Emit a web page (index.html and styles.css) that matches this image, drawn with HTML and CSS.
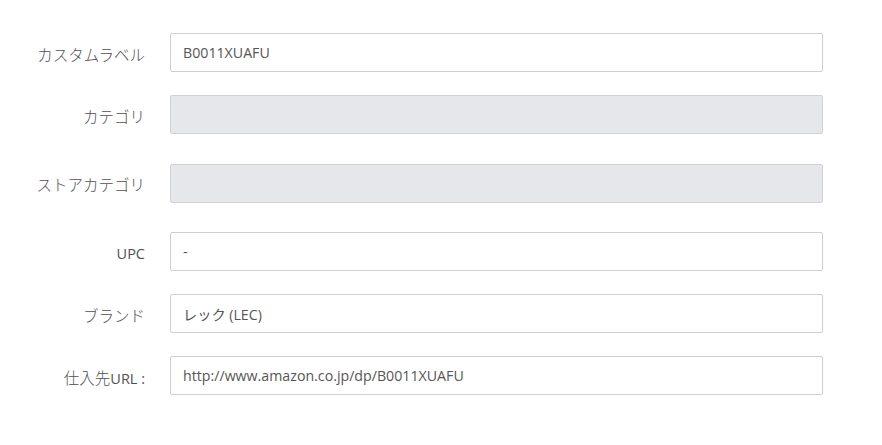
FILE: index.html
```html
<!DOCTYPE html>
<html lang="ja">
<head>
<meta charset="utf-8">
<link rel="stylesheet" href="styles.css">
</head>
<body>
<form class="form">
  <div class="row">
    <label class="label">カスタムラベル</label>
    <div class="field">B0011XUAFU</div>
  </div>
  <div class="row row-select">
    <label class="label">カテゴリ</label>
    <div class="field field-disabled"></div>
  </div>
  <div class="row row-select">
    <label class="label">ストアカテゴリ</label>
    <div class="field field-disabled"></div>
  </div>
  <div class="row">
    <label class="label"><span class="latin">UPC</span></label>
    <div class="field">-</div>
  </div>
  <div class="row">
    <label class="label">ブランド</label>
    <div class="field">レック (LEC)</div>
  </div>
  <div class="row">
    <label class="label">仕入先<span class="latin">URL :</span></label>
    <div class="field">http://www.amazon.co.jp/dp/B0011XUAFU</div>
  </div>
</form>
</body>
</html>
```
FILE: styles.css
```css
html, body {
  margin: 0;
  padding: 0;
  background: #ffffff;
}
body {
  font-family: "Open Sans", "Noto Sans CJK JP", sans-serif;
  color: #555555;
}
.form {
  padding: 33px 0 0 0;
  width: 823px;
  display: flex;
  flex-direction: column;
}
.row {
  display: flex;
  align-items: center;
  gap: 23px;
  margin-bottom: 23px;
}
.row-select {
  margin-bottom: 29.5px;
}
.label {
  width: 145px;
  flex: none;
  text-align: right;
  font-size: 15.5px;
  font-weight: 300;
  color: #505050;
  padding-top: 3px;
  margin-right: 2px;
}
.latin {
  font-size: 14.5px;
  font-weight: 400;
}
.field {
  flex: 1;
  box-sizing: border-box;
  height: 39px;
  border: 1px solid #cfcfcf;
  border-radius: 2px;
  background: #ffffff;
  padding: 0 12px;
  display: flex;
  align-items: center;
  font-size: 14.2px;
  color: #555555;
}
.field-disabled {
  background: #e6e7ea;
  border-color: #d0d1d4;
}
```
